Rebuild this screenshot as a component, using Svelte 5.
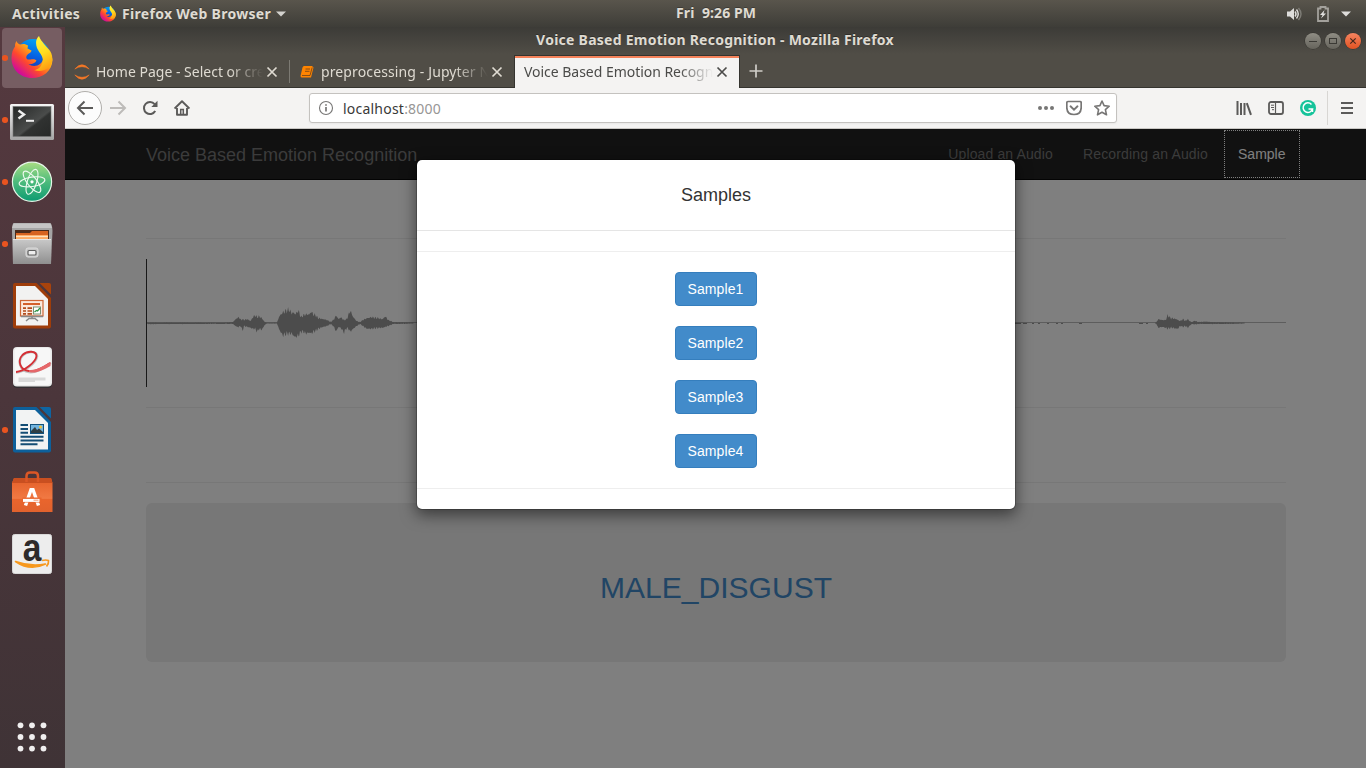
<script>
  const samples = ['Sample1', 'Sample2', 'Sample3', 'Sample4'];

  // envelope key points: [x, height above the axis, height below the axis]
  const left = [
    [0, .5, .5], [3, .6, 1.2], [18, .6, 1], [40, .6, 1], [80, .6, .8], [87, 1, 1], [90.7, 5, 4], [93, 6, 4], [95, 3, 3], [96.3, 4, 9], [98, 3, 3],
    [101, 4, 4], [104.7, 2, 5], [106.7, 6, 6], [109, 8, 6], [111.3, 6, 9], [113, 7, 6], [116, 5, 7], [118.7, 1, 2], [121, .5, .6],
    [131, .6, .6], [133.3, 7, 7], [136.7, 11, 13], [140.7, 13, 11], [143.3, 14, 11], [145.7, 10, 11], [147.3, 11, 13],
    [149.3, 9, 15], [152.3, 13, 13], [155, 6, 9], [157.3, 8, 9], [160, 9, 11], [163.3, 9, 10], [165.3, 12, 11], [167.3, 9, 9],
    [169.7, 8, 8], [172.3, 5, 6], [177.3, 4, 4], [181.3, 3, 3], [184.7, 1, 1], [187.3, 3, 3], [190.3, 8, 9], [192.3, 4, 4],
    [194.7, 6, 5], [198, 3, 10], [200.7, 4, 5], [202.3, 8, 6], [204.3, 13, 9], [207.3, 6, 6], [210.7, 2, 3], [214, 1, 1],
    [216.7, 3, 3], [220.7, 5, 6], [225.7, 6, 6], [232.3, 5, 5], [236.7, 4, 5], [239.3, 7, 4], [242.3, 3, 3], [247.3, 1, 1],
    [260, .7, .8], [268, .5, .5]
  ];
  const right = [
    [1009, .5, .5], [1010.5, 1, 1], [1012, 4, 5], [1016.7, 3, 4], [1019.7, 3, 5], [1021.7, 8, 6], [1024.7, 5, 5],
    [1026.7, 5, 5], [1030.7, 4, 6], [1032, 3, 6], [1034, 2, 3], [1037.3, 4, 4], [1039.3, 2, 3], [1041.7, 4, 5], [1043.7, 2, 3],
    [1045.7, 1, 1], [1049, 2.4, 1.5], [1052, 1, 1], [1060, 1.4, 1], [1067, .9, 1], [1087, .7, .9], [1099, .5, .5]
  ];
  function envelope(points) {
    const top = [];
    const bottom = [];
    let k = 0;
    for (let x = points[0][0]; x <= points[points.length - 1][0]; x += 0.7) {
      while (k < points.length - 2 && points[k + 1][0] < x) k++;
      const [x0, u0, d0] = points[k];
      const [x1, u1, d1] = points[k + 1];
      const t = (x - x0) / (x1 - x0);
      const noise = 0.95 + 0.24 * Math.sin(x * 4.7) * Math.cos(x * 1.9);
      const up = Math.max(0.5, (u0 + (u1 - u0) * t) * noise);
      const down = Math.max(0.5, (d0 + (d1 - d0) * t) * noise);
      top.push(`${x.toFixed(1)},${(64 - up).toFixed(1)}`);
      bottom.unshift(`${x.toFixed(1)},${(64 + down).toFixed(1)}`);
    }
    return [...top, ...bottom].join(' ');
  }
  const waves = [envelope(left), envelope(right)];
</script>

{#snippet firefox()}
  <svg class="fox" viewBox="0 0 42 44">
    <defs>
      <linearGradient id="fxBody" x1="0.85" y1="0.1" x2="0.15" y2="0.85">
        <stop offset="0" stop-color="#ffe72d" /><stop offset=".35" stop-color="#ffab16" /><stop offset=".65" stop-color="#ff4a2c" /><stop offset="1" stop-color="#d0089f" />
      </linearGradient>
      <linearGradient id="fxTail" x1="0.3" y1="0" x2="0.6" y2="1">
        <stop offset="0" stop-color="#fff53c" /><stop offset=".5" stop-color="#ffdd20" /><stop offset="1" stop-color="#ff9a10" />
      </linearGradient>
      <linearGradient id="fxBlue" x1="0.7" y1="0" x2="0.4" y2="1">
        <stop offset="0" stop-color="#00a8f5" /><stop offset=".5" stop-color="#0563e4" /><stop offset="1" stop-color="#242a9c" />
      </linearGradient>
    </defs>
    <circle cx="22" cy="21" r="17" fill="url(#fxBlue)" />
    <path fill="url(#fxBody)" d="M5.5 6C6 8 7.500 9 9 9.500C12 8.500 15 9 17 10.500L16.500 13.500L20.500 15.500C20.500 18 16.500 18.500 15.500 21C14.500 24 17 25 19.500 24.500C22 24 24 24 25.500 25.500C24 29 19.500 29.500 17.500 29C22 33 32 31 32.500 22C33 18 28 16 28 11C33 13 41 17 41.500 25C41 36 32 43 21 43C9 43 .5 34 .5 23C.5 18 2 14 4 11.500C3.800 9.500 4.500 7.500 5.500 6Z" />
    <path fill="url(#fxTail)" d="M28 1C24.500 4 24.500 9 26 13C28 18 33 21 31.500 27C30 33 26 35 23 35C31 38 39 34 41 27C43 17 36 13 33 9C31 6.500 29 4 28 1Z" />
  </svg>
{/snippet}

{#snippet closeMark()}
  <svg class="x" width="12" height="12" viewBox="0 0 12 12"><path d="M1.500 1.500L10.500 10.500M10.500 1.500L1.500 10.500" fill="none" stroke="currentColor" stroke-width="1.7" /></svg>
{/snippet}

<div class="desktop">
  <header class="panel">
    <span class="activities">Activities</span>
    <span class="appicon">{@render firefox()}</span>
    <span class="appname">Firefox Web Browser</span>
    <svg width="10" height="6" viewBox="0 0 10 6"><path d="M0 .5H10L5 5.500Z" fill="#d3d2ce" /></svg>
    <span class="clock">Fri&nbsp; 9:26 PM</span>
    <div class="status">
      <svg width="17" height="16" viewBox="0 0 17 16">
        <path d="M1 5.500H4L8 2V14L4 10.500H1Z" fill="#dedddb" />
        <path d="M9 5.500Q11 8 9 10.500M10.500 3.500Q14 8 10.500 12.500" fill="none" stroke="#dedddb" stroke-width="1.4" />
        <path d="M12.500 2Q17.500 8 12.500 14" fill="none" stroke="#7e7c76" stroke-width="1.4" />
      </svg>
      <svg class="battery" width="12" height="16" viewBox="0 0 12 16">
        <path d="M1 2.500H3.500V1H8.500V2.500H11V15H1Z" fill="none" stroke="#a3a19c" stroke-width="1.8" />
        <path d="M7.500 4L3 9H5.500L4 12.500L9 7.500H6.500Z" fill="#e2e1df" />
      </svg>
      <svg width="10" height="6" viewBox="0 0 10 6"><path d="M0 .5H10L5 5.500Z" fill="#dedddb" /></svg>
    </div>
  </header>

  <div class="below">
    <aside class="dock">
      <div class="slot active">
        <div class="tile">{@render firefox()}</div>
        <i class="run"></i>
      </div>

      <div class="slot">
        <svg width="65" height="62" viewBox="0 0 65 62">
          <defs><linearGradient id="term" x1="0" y1="0" x2="1" y2="1"><stop offset="0" stop-color="#252726" /><stop offset=".55" stop-color="#4a4c4b" /><stop offset=".6" stop-color="#303231" /><stop offset="1" stop-color="#272928" /></linearGradient>
          <linearGradient id="frame" x1="0" y1="0" x2="0" y2="1"><stop offset="0" stop-color="#f5f5f5" /><stop offset="1" stop-color="#a4a4a4" /></linearGradient></defs>
          <rect x="10" y="15" width="44" height="36" rx="1.5" fill="url(#frame)" />
          <rect x="13" y="17.500" width="38" height="30" fill="url(#term)" stroke="#777" stroke-width=".6" />
          <path d="M18.500 21.500L24 25.500L18.500 29.500" fill="none" stroke="#eee" stroke-width="2.400" /><path d="M26 31.800H34" stroke="#eee" stroke-width="2" />
        </svg>
        <i class="run"></i>
      </div>

      <div class="slot">
        <svg width="65" height="62" viewBox="0 0 65 62">
          <defs><linearGradient id="atom" x1="0" y1="0" x2="0" y2="1"><stop offset="0" stop-color="#a8dd83" /><stop offset=".5" stop-color="#4dbb7c" /><stop offset="1" stop-color="#0d9b72" /></linearGradient></defs>
          <circle cx="32" cy="30.800" r="19.600" fill="url(#atom)" stroke="#e5f6e7" stroke-width="1.200" />
          <g fill="none" stroke="#eefaf0" stroke-width="1.100">
            <ellipse cx="32" cy="30.800" rx="13" ry="4.700" transform="rotate(-9 32 30.800)" />
            <ellipse cx="32" cy="30.800" rx="13" ry="4.700" transform="rotate(52 32 30.800)" />
            <ellipse cx="32" cy="30.800" rx="13" ry="4.700" transform="rotate(108 32 30.800)" />
          </g>
          <circle cx="32" cy="30.800" r="1.600" fill="#fff" />
        </svg>
        <i class="run"></i>
      </div>

      <div class="slot">
        <svg width="65" height="62" viewBox="0 0 65 62">
          <defs><linearGradient id="drawer" x1="0" y1="0" x2="0" y2="1"><stop offset="0" stop-color="#c9c9c9" /><stop offset="1" stop-color="#8f8f8f" /></linearGradient></defs>
          <path d="M14 10H50Q52 10 52.500 18L51 51H13L12 18Q12 10 14 10Z" fill="#a5a5a5" />
          <path d="M13.500 10.500H50.500L52 15H12Z" fill="#c5c5c5" />
          <rect x="15" y="17" width="34" height="11" fill="#4b2b1c" />
          <path d="M16 20H30L32 18H48V28H16Z" fill="#d76320" />
          <path d="M16 22H48V26H16Z" fill="#ffab63" /><path d="M16 23.500H48" stroke="#ffe1bd" stroke-width="1.200" />
          <path d="M13 26H51V51H13Z" fill="url(#drawer)" /><path d="M13 26.500H51" stroke="#e5e5e5" />
          <rect x="26" y="35" width="12" height="9" rx="2" fill="#c5c5c5" stroke="#ddd" /><rect x="28" y="37.500" width="8" height="4.500" rx="1" fill="#eee" stroke="#606060" stroke-width="1.200" />
        </svg>
        <i class="run"></i>
      </div>

      <div class="slot">
        <svg width="65" height="62" viewBox="0 0 65 62">
          <path d="M15 8H36.500L51 23V51.500Q51 53.500 49 53.500H15Q13 53.500 13 51.500V10Q13 8 15 8Z" fill="#9f3d0a" />
          <path d="M16 11H35L48 24V50.500H16Z" fill="#f2f2f1" />
          <path d="M39.500 8H49Q51 8 51 10V19.500Z" fill="#a9430c" />
          <rect x="20.500" y="25.500" width="22.500" height="15.500" fill="#fbe9dd" stroke="#ce6636" stroke-width="1.200" />
          <path d="M23 29H40" stroke="#d4602a" stroke-width="2" /><path d="M23 33.200H26M23 36H26M23 38.800H26M27.500 33.200H32M27.500 36H32M27.500 38.800H32" stroke="#b34b1b" stroke-width="1.700" />
          <rect x="33.500" y="32" width="7" height="7" fill="#fff" stroke="#789074" /><path d="M34.500 37L36.500 35.500L37.500 36L40 33" fill="none" stroke="#2d9546" stroke-width="1.300" />
          <path d="M21 41.500H43M32 42V44M26 46L29 43.500H35L38 46" fill="none" stroke="#888" stroke-width="1.500" />
        </svg>
      </div>

      <div class="slot">
        <svg width="65" height="62" viewBox="0 0 65 62">
          <rect x="13" y="11" width="39" height="40" rx="4" fill="#343033" /><rect x="13" y="10" width="39" height="39.500" rx="4" fill="#e9e9e9" /><rect x="14.500" y="11" width="36" height="37" rx="3" fill="#f7f7f7" />
          <path d="M18.500 40.500H45.500V43.500H35V45H18.500Z" fill="#d9d9d9" />
          <path d="M16 35.500C24 35 36 26 37 19.500C37 14 28 13.500 23 18C17 24 20 34 29 35C36 36 43 31 51 26" fill="none" stroke="#c4c4c4" stroke-width="2.600" />
          <path d="M16 35C24 34.500 36 25 36.500 19C36.500 13.500 27 13.500 22.500 18C17 24 20 33 29 34C36 35 43 31 50 26" fill="none" stroke="#d62f35" stroke-width="1.800" />
          <path d="M29 33C37 34 44 28 50.500 25V29C43 33 36 37 29 35Z" fill="#e5676a" />
        </svg>
      </div>

      <div class="slot">
        <svg width="65" height="62" viewBox="0 0 65 62">
          <path d="M15 8H36.500L51 23V51.500Q51 53.500 49 53.500H15Q13 53.500 13 51.500V10Q13 8 15 8Z" fill="#0d609b" />
          <path d="M16 11H35L48 24V50.500H16Z" fill="#f2f3f3" />
          <path d="M39.500 8H49Q51 8 51 10V19.500Z" fill="#0e65a2" />
          <path d="M20.500 26H28M20.500 30H28M20.500 33.800H28M20.500 37.700H43.500M20.500 41.500H43.500M20.500 45.300H37.500" stroke="#144d74" stroke-width="2" />
          <rect x="30.500" y="25.500" width="13" height="9" fill="#72b4df" stroke="#14527c" /><circle cx="40.500" cy="28" r="1.500" fill="#f4c23c" /><path d="M31 34V32L35 28L37 31L39 29.500L43 33V34Z" fill="#303e43" />
        </svg>
        <i class="run"></i>
      </div>

      <div class="slot">
        <svg width="65" height="62" viewBox="0 0 65 62">
          <defs><linearGradient id="bag" x1="0" y1="0" x2="0" y2="1"><stop offset="0" stop-color="#e45f28" /><stop offset=".6" stop-color="#f17943" /><stop offset=".62" stop-color="#e9652d" /><stop offset="1" stop-color="#e2622d" /></linearGradient></defs>
          <path d="M14 17H51L52.500 22V51H12V22Z" fill="url(#bag)" /><path d="M14 17H51L52.500 22H12Z" fill="#c94f20" />
          <path d="M26.500 21V15Q26.500 11.500 30 11.500H34.500Q38 11.500 38 15V21" fill="none" stroke="#db5726" stroke-width="2.500" />
          <path d="M25.500 44.500L31 28.800H33L38.500 44.500" fill="none" stroke="#fff" stroke-width="3.400" /><path d="M22.500 39H41.500" stroke="#e9652d" stroke-width="5" /><path d="M23 39.400H39.500" stroke="#fff" stroke-width="3" /><path d="M33.500 39.200H38.500" stroke="#f4a683" stroke-width="1.200" />
        </svg>
      </div>

      <div class="slot">
        <svg width="65" height="62" viewBox="0 0 65 62">
          <rect x="12.500" y="11.500" width="39" height="39" rx="2" fill="#ededed" stroke="#d8d8d8" />
          <text transform="translate(32 37.500) scale(.86 1)" text-anchor="middle" font-family="Liberation Sans, sans-serif" font-weight="700" font-size="39" fill="#2e2b2b">a</text>
          <path d="M15.500 38.500Q30 48.500 45.500 41Q31 44 15.500 38.500Z" fill="#f7981d" stroke="#f7981d" stroke-width="1.600" stroke-linejoin="round" /><path d="M42 37.500Q46 36.500 48.500 37.500Q49 40.500 46.500 43.500" fill="none" stroke="#f7981d" stroke-width="1.700" />
        </svg>
      </div>

      <svg class="apps" width="65" height="62" viewBox="0 0 65 62">
        {#each [19.3, 31, 42.6] as y}
          {#each [20.5, 32, 43.5] as x}
            <circle cx={x} cy={y} r="2.9" fill="#f0efef" />
          {/each}
        {/each}
      </svg>
    </aside>

    <section class="window">
      <div class="titlebar">
        <span class="wtitle">Voice Based Emotion Recognition - Mozilla Firefox</span>
        <div class="controls">
          <i><svg width="16" height="16" viewBox="0 0 16 16"><path d="M4 8.500H12" stroke="#3b3a35" /></svg></i>
          <i><svg width="16" height="16" viewBox="0 0 16 16"><rect x="4.500" y="5.500" width="7" height="5" fill="none" stroke="#3b3a35" /></svg></i>
          <i class="quit"><svg width="16" height="16" viewBox="0 0 16 16"><path d="M5.300 5.300L10.700 10.700M10.700 5.300L5.300 10.700" stroke="#46281c" stroke-width="1.200" /></svg></i>
        </div>
      </div>

      <nav class="tabs">
        <div class="tab first">
          <svg class="fav" width="16" height="16" viewBox="0 0 16 16"><path d="M.8 5Q8-3.500 15.200 5Q8 .3 .8 5ZM.8 11Q8 19.500 15.200 11Q8 15.700 .8 11Z" fill="#f37726" stroke="#f37726" stroke-width=".6" /></svg>
          <span class="label t1">Home Page - Select or create</span>{@render closeMark()}
        </div>
        <div class="tab second">
          <svg class="fav" width="16" height="16" viewBox="0 0 16 16"><path d="M5 2H13L14.500 3.500L12 13.500H3Q1.500 13.500 1.500 12L3.500 3.500Q4 2 5 2Z" fill="#ff8400" /><path d="M6.500 5H11M6 7.300H10.500M3 11.500H11L13.200 3.500" fill="none" stroke="#6b4019" stroke-width=".8" /></svg>
          <span class="label t2">preprocessing - Jupyter Notebook</span>{@render closeMark()}
        </div>
        <div class="tab current">
          <span class="label t3">Voice Based Emotion Recognition</span>{@render closeMark()}
        </div>
        <svg class="plus" width="14" height="14" viewBox="0 0 14 14"><path d="M7 .5V13.500M.5 7H13.500" stroke="#cfcdc8" stroke-width="1.700" /></svg>
      </nav>

      <div class="toolbar">
        <span class="back"><svg width="18" height="16" viewBox="0 0 18 16"><path d="M17 8H2M8.500 1.500L2 8L8.500 14.500" fill="none" stroke="#5b5a59" stroke-width="2" /></svg></span>
        <span class="tool"><svg width="18" height="16" viewBox="0 0 18 16"><path d="M1 8H16M9.500 1.500L16 8L9.500 14.500" fill="none" stroke="#bdbbb9" stroke-width="2" /></svg></span>
        <span class="tool"><svg width="16" height="16" viewBox="0 0 16 16"><path d="M13.200 11A6 6 0 1 1 12.600 4.200" fill="none" stroke="#5b5a59" stroke-width="2" /><path d="M15.500 .8V7H9.300Z" fill="#5b5a59" /></svg></span>
        <span class="tool"><svg width="16" height="16" viewBox="0 0 16 16"><path d="M.6 8.500L8 1.300L15.400 8.500M3 8V14.800H13V8" fill="none" stroke="#5b5a59" stroke-width="1.900" stroke-linejoin="round" /><path d="M6.700 14V9.500H9.300V14" fill="none" stroke="#5b5a59" stroke-width="1.500" /></svg></span>
        <div class="url">
          <svg width="16" height="16" viewBox="0 0 16 16"><circle cx="8" cy="8" r="6.500" fill="none" stroke="#777675" stroke-width="1.100" /><path d="M8 7V11.500M8 4.200V5.800" stroke="#777675" stroke-width="1.700" /></svg>
          <span class="address">localhost<b>:8000</b></span>
          <svg width="18" height="16" viewBox="0 0 18 16"><circle cx="3" cy="8" r="2" fill="#777675" /><circle cx="9" cy="8" r="2" fill="#777675" /><circle cx="15" cy="8" r="2" fill="#777675" /></svg>
          <svg width="16" height="16" viewBox="0 0 16 16"><path d="M2 1.500H14Q15.200 1.500 15.200 2.700V7.500Q15 14.500 8 14.500T.8 7.500V2.700Q.8 1.500 2 1.500Z" fill="none" stroke="#777675" stroke-width="1.700" /><path d="M4.500 6.300L8 9.600L11.500 6.300" fill="none" stroke="#777675" stroke-width="1.900" stroke-linecap="round" /></svg>
          <svg width="16" height="16" viewBox="0 0 16 16"><path d="M8 1L10.100 5.600L15.200 6.200L11.400 9.600L12.500 14.800L8 12.200L3.500 14.800L4.600 9.600L.8 6.200L5.900 5.600Z" fill="none" stroke="#777675" stroke-width="1.600" stroke-linejoin="round" /></svg>
        </div>
        <div class="extras">
          <span class="tool"><svg width="16" height="16" viewBox="0 0 16 16"><path d="M1.500 1V15M5 3V15M8.500 3V15M10.800 3.200L15 14.800" fill="none" stroke="#5b5a59" stroke-width="2" /></svg></span>
          <span class="tool"><svg width="16" height="16" viewBox="0 0 16 16"><rect x="1" y="2" width="14" height="12" rx="2" fill="none" stroke="#5b5a59" stroke-width="1.800" /><path d="M7.500 2V14" stroke="#5b5a59" stroke-width="1.200" /><path d="M3 5.200H6M3 7.500H6M4 9.700H6" stroke="#5b5a59" /></svg></span>
          <span class="tool"><svg width="16" height="16" viewBox="0 0 16 16"><circle cx="8" cy="8" r="8" fill="#15c39a" /><path d="M11.500 4.500A4.800 4.800 0 1 0 12.500 9H8.500M12.500 8.500V12" fill="none" stroke="#fff" stroke-width="1.500" /></svg></span>
          <span class="rule"></span>
          <span class="tool"><svg width="12" height="12" viewBox="0 0 12 12"><path d="M0 1H12M0 6H12M0 11H12" stroke="#5b5a59" stroke-width="2" /></svg></span>
        </div>
      </div>

      <main class="page">
        <div class="navbar">
          <div class="container">
            <span class="brand">Voice Based Emotion Recognition</span>
            <div class="links">
              <span class="upload">Upload an Audio</span>
              <span class="record">Recording an Audio</span>
              <span class="focus">Sample</span>
            </div>
          </div>
        </div>
        <div class="container body">
          <hr />
          <svg class="wave" width="1140" height="128" viewBox="0 0 1140 128">
            <rect x="0" y="63" width="1140" height="1" fill="#bbb" />
            {#each waves as points}
              <polygon {points} fill="#999" />
            {/each}
            <path d="M2 64.500H62M70 64.500H84M866 64.500H882M886 64.500H888M892 64.500H894M901 64.500H903M910 64.500H912M915 64.500H917M933 64.500H936M993 64.500H997M1000 64.500H1002" stroke="#999" stroke-width="1" stroke-dasharray="9 2 4 1" />
            <rect x="0" y="0" width="1" height="128" fill="#333" />
          </svg>
          <hr />
          <div class="player"></div>
          <hr />
          <div class="jumbo">MALE_DISGUST</div>
        </div>
        <div class="backdrop">
          <div class="modal">
            <div class="mhead">Samples</div>
            <hr />
            {#each samples as name}
              <button>{name}</button>
            {/each}
            <hr class="last" />
          </div>
        </div>
      </main>
    </section>
  </div>
</div>

<style>
  :global(body) { margin: 0; overflow: hidden; }
  .desktop { width: 1366px; height: 768px; display: flex; flex-direction: column; overflow: hidden; font-family: "Noto Sans", sans-serif; }
  svg { display: block; flex: none; }
  .panel { height: 27px; display: grid; grid-template-columns: 88px 29px auto auto 1fr; align-items: center; background: linear-gradient(#59554c, #3e3d38); color: #dfdbd2; font-size: 14px; font-weight: 700; box-sizing: border-box; padding-left: 12px; position: relative; text-shadow: 0 -1px rgba(0,0,0,.25); white-space: nowrap; }
  .activities { letter-spacing: .32px; }
  .appicon { width: 17px; }
  .appicon .fox { width: 16px; height: 17px; }
  .appname { margin: 0 5px 0 -7px; letter-spacing: .3px; }
  .clock { position: absolute; left: 676px; top: 3px; line-height: 20px; letter-spacing: .1px; }
  .status { justify-self: end; display: flex; align-items: center; padding-right: 15px; }
  .battery { margin: 0 12px 0 14px; }
  .below { display: flex; flex: 1; min-height: 0; }
  .dock { width: 65px; flex: none; display: flex; flex-direction: column; background: linear-gradient(#55393f, #4b363b 50%, #3f3336); }
  .slot { height: 62px; flex: none; position: relative; }
  .run { position: absolute; left: 2px; top: 28px; width: 5.5px; height: 5.5px; border-radius: 50%; background: #e95420; }
  .tile { margin: 1px 3px 1px 2px; height: 60px; border-radius: 4px; background: #765d62; display: flex; align-items: center; justify-content: center; }
  .tile .fox { width: 42px; height: 44px; margin-top: -2px; }
  .apps { margin-top: auto; }
  .window { flex: 1; min-width: 0; display: flex; flex-direction: column; background: linear-gradient(#3c3b37, #504d46 27px, #504d46 60px); }
  .titlebar { height: 28px; flex: none; display: grid; grid-template-columns: 1fr auto; align-items: center; }
  .wtitle { text-align: center; color: #dfdbd2; font-weight: 700; font-size: 14px; line-height: 20px; margin-top: -2px; letter-spacing: .25px; padding-left: 60px; text-shadow: 0 -1px rgba(0,0,0,.3); }
  .controls { display: flex; gap: 4px; padding-right: 5px; }
  .controls i { width: 16px; height: 16px; border-radius: 50%; background: linear-gradient(#8f8d84, #66645c); box-shadow: 0 0 0 .5px #33322e; }
  .controls .quit { background: linear-gradient(#f58460, #e25322); }
  .tabs { height: 33px; flex: none; display: flex; border-bottom: 1px solid #35342f; box-sizing: border-box; color: #dfdbd2; font-size: 14px; }
  .tab { display: flex; align-items: center; box-sizing: border-box; height: 33px; position: relative; width: 225px; padding: 0 12px 0 9px; }
  .first::after { content: ""; position: absolute; right: 0; top: 5px; height: 23px; width: 1px; background: #7c7a73; }
  .fav { margin-right: 6px; }
  .label { flex: 1; min-width: 0; overflow: hidden; white-space: nowrap; line-height: 22px; margin-right: 3px; -webkit-mask-image: linear-gradient(to left, transparent, #000 34px); mask-image: linear-gradient(to left, transparent, #000 34px); }
  .t2 { letter-spacing: .12px; }
  .t3 { letter-spacing: -.03px; }
  .current { background: #f4f3f2; color: #4b4b49; border: 1px solid #35342f; border-bottom: 0; box-shadow: inset 0 2px #f5825a; width: 226px; margin-left: -1px; padding-right: 11px; }
  .plus { margin: 9px 0 0 9px; }
  .toolbar { height: 41px; flex: none; display: flex; align-items: center; box-sizing: border-box; border-bottom: 1px solid #c9c7c4; background: #f4f3f2; padding-left: 3px; }
  .back { width: 34px; height: 34px; box-sizing: border-box; border: 1px solid #b0aeab; border-radius: 50%; background: #fcfcfc; display: flex; align-items: center; justify-content: center; }
  .tool { width: 32px; height: 32px; display: flex; align-items: center; justify-content: center; flex: none; }
  .url { width: 808px; height: 30px; margin-left: 111px; box-sizing: border-box; border: 1px solid #c4c2bf; border-radius: 3px; background: #fff; display: flex; align-items: center; padding: 0 6px 0 8px; gap: 12px; box-shadow: 0 1px 2px rgba(0,0,0,.05); }
  .address { flex: 1; margin-left: -3px; font-size: 14px; letter-spacing: .22px; color: #393938; }
  .address b { font-weight: 400; color: #979695; }
  .url svg:nth-of-type(2) { margin-right: -1px; }
  .extras { margin-left: auto; display: flex; align-items: center; padding-right: 3px; }
  .rule { width: 1px; height: 34px; background: #d8d6d3; margin: 0 3px 0 3px; }
  .extras .tool:first-child { margin-left: 0; }
  .page { flex: 1; min-height: 0; position: relative; overflow: hidden; background: #fff; font-family: "Liberation Sans", Arial, sans-serif; font-size: 14px; line-height: 20px; color: #333; }
  .navbar { height: 51px; box-sizing: border-box; border-bottom: 1px solid #080808; background: #222; color: #777; }
  .container { width: 1140px; margin: 0 auto; }
  .navbar .container { display: flex; justify-content: space-between; width: 1140px; }
  .brand { font-size: 18px; padding: 16px 0 0 .5px; }
  .links { display: flex; margin-right: -15px; }
  .links span { padding: 15px; }
  .links .upload { letter-spacing: .13px; }
  .links .record { letter-spacing: .16px; }
  .links .focus { color: #fff; outline: 1px dotted #fff; outline-offset: -2px; }
  hr { margin: 20px 0; border: 0; border-top: 1px solid #eee; }
  .body { padding-top: 38px; }
  .player { height: 34px; }
  .jumbo { height: 159px; background: #eee; border-radius: 6px; color: #428bca; font-size: 30px; letter-spacing: .04px; display: flex; align-items: center; justify-content: center; box-sizing: border-box; padding: 11px 0 0 1px; }
  .backdrop { position: absolute; inset: 0; background: rgba(0,0,0,.5); padding-top: 30px; }
  .modal { width: 600px; height: 351px; box-sizing: border-box; margin: 0 auto; border: 1px solid rgba(0,0,0,.2); border-radius: 6px; background: #fff; background-clip: padding-box; box-shadow: 0 5px 15px rgba(0,0,0,.5); display: flex; flex-direction: column; align-items: center; }
  .modal hr { width: 100%; }
  .mhead { width: 100%; height: 71px; box-sizing: border-box; border-bottom: 1px solid #e5e5e5; text-align: center; font-size: 18px; line-height: 20px; padding: 25px 0 0 1px; }
  button { width: 82px; height: 34px; margin-bottom: 20px; padding: 0; border: 1px solid #357ebd; border-radius: 4px; background: #428bca; color: #fff; font: 14px/20px "Liberation Sans", Arial, sans-serif; letter-spacing: .1px; }
  .modal .last { margin: 0; }
</style>
